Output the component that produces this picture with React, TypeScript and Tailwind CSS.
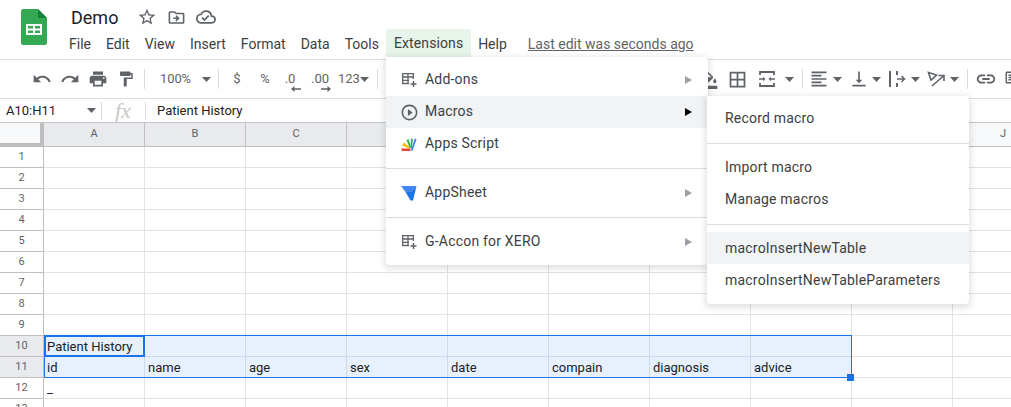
import React from "react";
import {
  MdUndo,
  MdRedo,
  MdPrint,
  MdFormatPaint,
  MdFormatColorFill,
  MdBorderAll,
  MdFormatAlignLeft,
  MdVerticalAlignBottom,
  MdLink,
  MdOutlineComment,
  MdStarBorder,
  MdOutlineDriveFileMove,
  MdOutlineCloudDone,
  MdPlayCircleOutline,
} from "react-icons/md";

const menuBar = ["File", "Edit", "View", "Insert", "Format", "Data", "Tools"];
const columns = ["A", "B", "C", "D", "E", "F", "G", "H", "I", "J"];
const rowNumbers = [1, 2, 3, 4, 5, 6, 7, 8, 9, 10, 11, 12, 13];
const headerCells = ["id", "name", "age", "sex", "date", "compain", "diagnosis", "advice"];

const Caret = ({ className = "" }: { className?: string }) => (
  <svg width="9" height="5" viewBox="0 0 9 5" className={`shrink-0 ${className}`}>
    <path d="M0 0h9L4.5 5z" fill="#5f6368" />
  </svg>
);

const Sep = () => <div className="mx-[4px] h-[20px] w-px bg-[#dadce0]" />;

const SheetsLogo = () => (
  <svg width="26" height="36" viewBox="0 0 26 36">
    <path d="M2.5 0H17l9 9v24.5a2.5 2.5 0 0 1-2.5 2.5h-21A2.5 2.5 0 0 1 0 33.500v-31A2.500 2.500 0 0 1 2.500 0z" fill="#34a853" />
    <path d="M17 0l9 9h-9z" fill="#188038" />
    <path d="M5 15h16v11H5zM7 17v2.500h5V17zm7 0v2.500h5V17zM7 21.500V24h5v-2.500zm7 0V24h5v-2.500z" fill="#fff" fillRule="evenodd" />
  </svg>
);

const AddOnIcon = () => (
  <svg width="16" height="16" viewBox="0 0 16 16" fill="none" stroke="#5f6368" strokeWidth="1.3">
    <path d="M8 11.500H1.700V1.700h10.600V7" />
    <path d="M1.700 5h10.600M1.700 8.300H8M7 1.700v9.800" />
    <path d="M12.500 9v6M9.500 12h6" strokeWidth="1.500" />
  </svg>
);

const AppsScriptIcon = () => (
  <svg width="16" height="15" viewBox="0 0 16 15">
    <path d="M0 11.500h9.500v2.500H1.200z" fill="#ea4335" />
    <path d="M1 8.500l2-3 6 5-1 1z" fill="#fbbc04" />
    <path d="M5.500 3l2-.8L10 10.500l-1.200.8z" fill="#34a853" />
    <path d="M9.500 11L10 1.500l1.800.3L11 12z" fill="#34a853" />
    <path d="M10 13l3.800-11.500 1.800.6L11.500 14z" fill="#4285f4" />
  </svg>
);

const AppSheetIcon = () => (
  <svg width="16" height="15" viewBox="0 0 16 15">
    <path d="M0 0h15.500l-5 6H4.500z" fill="#4285f4" />
    <path d="M4.500 6h6L15.500 0l-3.500 14.500H9.500z" fill="#1a73e8" />
  </svg>
);

const MergeIcon = () => (
  <svg width="18" height="18" viewBox="0 0 18 18" fill="none" stroke="#5f6368" strokeWidth="1.800">
    <path d="M2 5V2h14v3M2 13v3h14v-3" />
    <path d="M1 9h4M17 9h-4" strokeWidth="1.400" />
    <path d="M7.500 9L5 6.800v4.400zM10.500 9L13 6.800v4.400z" fill="#5f6368" stroke="none" />
  </svg>
);

const WrapIcon = () => (
  <svg width="18" height="18" viewBox="0 0 18 18" fill="none" stroke="#5f6368" strokeWidth="2">
    <path d="M2 1v16M9 1v4M9 13v4" />
    <path d="M9 9h7M13.500 6l3 3-3 3" strokeWidth="1.500" />
  </svg>
);

const RotateIcon = () => (
  <svg width="18" height="16" viewBox="0 0 18 16" fill="none" stroke="#5f6368" strokeWidth="1.600">
    <path d="M1.500 1.500l8 2.500-5.500 5z" />
    <path d="M5 15L16.500 5M11.500 4.500h5.500V10" />
  </svg>
);

const Decimal = ({ label, arrow, className = "" }: { label: string; arrow: "left" | "right"; className?: string }) => (
  <div className={`mt-[6px] flex flex-col items-center text-[13px] leading-[14px] text-[#5f6368] ${className}`}>
    <span>{label}</span>
    <svg width="10" height="6" viewBox="0 0 10 6" className="ml-[11px]">
      {arrow === "left" ? (
        <path d="M10 2.200H3.500V0L0 3l3.500 3V3.800H10z" fill="#5f6368" />
      ) : (
        <path d="M0 2.200h6.500V0L10 3 6.500 6V3.800H0z" fill="#5f6368" />
      )}
    </svg>
  </div>
);

const ToolIcon = ({ children }: { children: React.ReactNode }) => (
  <div className="flex h-[24px] w-[28px] shrink-0 items-center justify-center text-[#5f6368]">{children}</div>
);

const MenuItem = ({
  icon,
  label,
  arrow,
  active,
}: {
  icon: React.ReactNode;
  label: string;
  arrow?: boolean;
  active?: boolean;
}) => (
  <div className={`flex h-[32px] items-center pl-[15px] pr-[16px] ${active ? "bg-[#f1f3f4]" : ""}`}>
    <div className="flex w-[24px] items-center">{icon}</div>
    <span className="-mt-[2px] flex-1 tracking-[0.2px]">{label}</span>
    {arrow && (
      <svg width="7" height="8" viewBox="0 0 7 8">
        <path d="M0 0l7 4-7 4z" fill={active ? "#000" : "#9aa0a6"} />
      </svg>
    )}
  </div>
);

const SubItem = ({ label, active }: { label: string; active?: boolean }) => (
  <div className={`flex h-[32px] items-center pl-[18px] tracking-[0.2px] ${active ? "bg-[#f1f3f4]" : ""}`}>{label}</div>
);

const cellClass = "flex items-end overflow-hidden whitespace-nowrap border-b border-r px-[3px] text-[13px] leading-[19px] text-[#202124]";

const App = () => {
  return (
    <div className="relative h-[407px] w-[1011px] overflow-hidden bg-white font-['Roboto',sans-serif]">
      {/* title and menu bar */}
      <div className="flex h-[60px] border-b border-[#dadce0] pl-[21px] pt-[9px]">
        <SheetsLogo />
        <div className="ml-[24px] -mt-[9px]">
          <div className="flex h-[34px] items-center">
            <span className="text-[18px] text-[#202124]">Demo</span>
            <div className="ml-[19px] flex items-center gap-[10px] text-[#5f6368]">
              <MdStarBorder size={20} />
              <MdOutlineDriveFileMove size={19} />
              <MdOutlineCloudDone size={20} />
            </div>
          </div>
          <div className="-ml-[2px] flex h-[20px] items-center gap-[15px] text-[14px] text-[#3c4043]">
            {menuBar.map((m) => (
              <span key={m}>{m}</span>
            ))}
            <span className="ml-[1px]">Extensions</span>
            <span>Help</span>
            <span className="ml-[6px] text-[#5f6368] underline">Last edit was seconds ago</span>
          </div>
        </div>
      </div>

      {/* toolbar */}
      <div className="flex h-[39px] items-center overflow-hidden border-b border-[#dadce0] pl-[28px] [&>*]:shrink-0">
        <ToolIcon><MdUndo size={20} /></ToolIcon>
        <ToolIcon><MdRedo size={20} /></ToolIcon>
        <ToolIcon><MdPrint size={20} /></ToolIcon>
        <ToolIcon><MdFormatPaint size={18} /></ToolIcon>
        <Sep />
        <span className="ml-[11px] w-[42px] text-[13px] tracking-[-0.1px] text-[#5f6368]">100%</span>
        <Caret />
        <div className="ml-[3px]"><Sep /></div>
        <div className="flex w-[28px] justify-center text-[13px] text-[#5f6368]">$</div>
        <div className="flex w-[28px] justify-center text-[13px] text-[#5f6368]">%</div>
        <Decimal label=".0" arrow="left" className="-ml-[3px] w-[28px]" />
        <Decimal label=".00" arrow="right" className="ml-[1px] w-[30px]" />
        <span className="ml-[3px] w-[21px] text-[13px] tracking-[-0.1px] text-[#5f6368]">123</span>
        <Caret className="ml-[1px]" />
        <div className="ml-[4px]"><Sep /></div>
        <div className="w-[313px]" />
        <ToolIcon><MdFormatColorFill size={20} /></ToolIcon>
        <ToolIcon><MdBorderAll size={21} /></ToolIcon>
        <div className="ml-[2px]"><ToolIcon><MergeIcon /></ToolIcon></div>
        <Caret className="ml-[4px]" />
        <div className="ml-[4px]"><Sep /></div>
        <div className="flex w-[24px] justify-center text-[#5f6368]"><MdFormatAlignLeft size={20} /></div>
        <Caret className="ml-[2px]" />
        <div className="ml-[5px] flex w-[24px] justify-center text-[#5f6368]"><MdVerticalAlignBottom size={20} /></div>
        <Caret className="ml-[1px]" />
        <div className="ml-[4px] flex w-[24px] justify-center"><WrapIcon /></div>
        <Caret className="ml-[2px]" />
        <div className="ml-[4px] flex w-[24px] justify-center"><RotateIcon /></div>
        <Caret className="ml-[2px]" />
        <div className="ml-[4px]"><Sep /></div>
        <div className="ml-[3px] text-[#5f6368]"><MdLink size={22} /></div>
        <div className="ml-[7px] text-[#5f6368]"><MdOutlineComment size={18} /></div>
      </div>

      {/* formula bar */}
      <div className="flex h-[24px] items-center border-b border-[#c4c7c5] text-[13px] text-[#202124]">
        <span className="ml-[6px] w-[81px]">A10:H11</span>
        <Caret />
        <div className="ml-[5px] h-[18px] w-px bg-[#dadce0]" />
        <span className="ml-[13px] w-[30px] font-['Liberation_Serif',serif] text-[22px] italic text-[#c4c7c9]">fx</span>
        <div className="h-[18px] w-px bg-[#dadce0]" />
        <span className="ml-[11px]">Patient History</span>
      </div>

      {/* sheet grid */}
      <div className="grid grid-cols-[44px_repeat(10,101px)] grid-rows-[24px_repeat(13,21px)]">
        <div className="border-b-4 border-r-4 border-[#bdbdbd] bg-[#f8f9fa]" />
        {columns.map((c, i) => (
          <div
            key={c}
            className={`flex items-center justify-center border-b border-r border-[#c0c0c0] text-[11px] text-[#5f6368] ${i < 8 ? "bg-[#e8eaed]" : "bg-[#f8f9fa]"}`}
          >
            {c}
          </div>
        ))}
        {rowNumbers.map((n) => (
          <React.Fragment key={n}>
            <div
              className={`flex items-center justify-center border-b border-r border-[#c0c0c0] text-[11px] text-[#5f6368] ${n === 10 || n === 11 ? "bg-[#e8eaed]" : "bg-white"}`}
            >
              {n}
            </div>
            {columns.map((c, i) => {
              const selected = (n === 10 || n === 11) && i < 8;
              return (
                <div
                  key={c}
                  className={`${cellClass} ${selected ? "border-[#cdd8e8] bg-[#e7f0fd]" : "border-[#e2e3e3] bg-white"}`}
                >
                  {n === 10 && i === 0 && "Patient History"}
                  {n === 11 && i < 8 && headerCells[i]}
                  {n === 12 && i === 0 && "_"}
                </div>
              );
            })}
          </React.Fragment>
        ))}
      </div>

      {/* selection overlay */}
      <div className="absolute left-[44px] top-[335px] h-[43px] w-[808px] border-[1.5px] border-[#1a73e8]" />
      <div className="absolute left-[44px] top-[335px] h-[22px] w-[101px] border-2 border-[#1a73e8]" />
      <div className="absolute left-[847px] top-[374px] h-[7px] w-[7px] bg-[#1a73e8]" />

      {/* open menu tab */}
      <div className="absolute left-[386px] top-[29px] flex h-[28px] w-[85px] items-center rounded-t-[4px] bg-[#e6f4ea] pl-[8px] text-[14px] tracking-[0.1px] text-[#3c4043]">
        Extensions
      </div>

      {/* extensions menu */}
      <div className="absolute left-[386px] top-[57px] h-[208px] w-[322px] rounded-b-[4px] rounded-tr-[4px] bg-white py-[7px] text-[14px] text-[#3c4043] shadow-[0_2px_6px_2px_rgba(60,64,67,0.15)]">
        <MenuItem icon={<AddOnIcon />} label="Add-ons" arrow />
        <MenuItem icon={<MdPlayCircleOutline size={19} className="-ml-[1px] text-[#5f6368]" />} label="Macros" arrow active />
        <MenuItem icon={<AppsScriptIcon />} label="Apps Script" />
        <div className="my-[8px] h-px bg-[#dadce0]" />
        <MenuItem icon={<AppSheetIcon />} label="AppSheet" arrow />
        <div className="my-[8px] h-px bg-[#dadce0]" />
        <MenuItem icon={<AddOnIcon />} label="G-Accon for XERO" arrow />
      </div>

      {/* macros submenu */}
      <div className="absolute left-[707px] top-[96px] h-[208px] w-[262px] rounded-b-[4px] rounded-tr-[4px] bg-white py-[6px] text-[14px] text-[#3c4043] shadow-[0_2px_6px_2px_rgba(60,64,67,0.15)]">
        <SubItem label="Record macro" />
        <div className="mb-[7px] mt-[9px] h-px bg-[#dadce0]" />
        <SubItem label="Import macro" />
        <SubItem label="Manage macros" />
        <div className="mb-[7px] mt-[9px] h-px bg-[#dadce0]" />
        <SubItem label="macroInsertNewTable" active />
        <SubItem label="macroInsertNewTableParameters" />
      </div>
    </div>
  );
};

export default App;
